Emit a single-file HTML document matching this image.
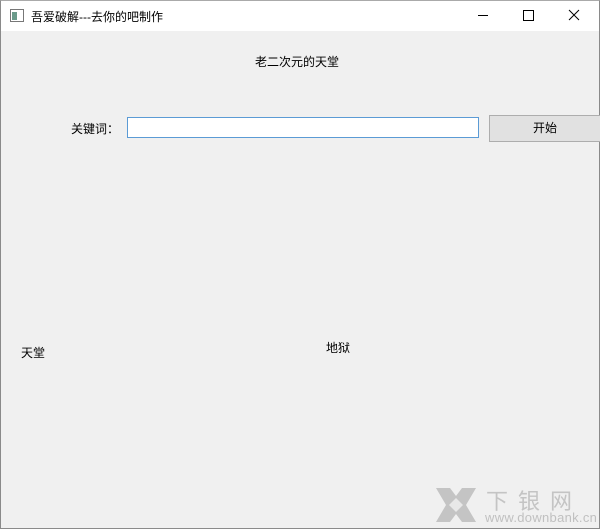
<!DOCTYPE html>
<html><head><meta charset="utf-8"><style>
body{margin:0;width:600px;height:529px;overflow:hidden;background:#f0f0f0;font-family:"Liberation Sans","Noto Sans CJK SC",sans-serif;font-size:12px;color:#000;position:relative}
.a{position:absolute;white-space:nowrap}
#tb{position:absolute;left:0;top:0;width:600px;height:31px;background:#fff}
#win{position:absolute;left:0;top:0;width:598px;height:527px;border:1px solid #8a8a8a;border-top:1px solid #aaa}
</style></head><body>
<div id="tb"></div>
<div id="win"></div>
<svg class="a" style="left:10px;top:9px" width="14" height="13"><rect x="0.5" y="0.5" width="13" height="12" fill="#fff" stroke="#777"/><rect x="2" y="3" width="5" height="8" fill="#6a9a8a"/></svg>
<div class="a" style="left:31px;top:8px;font-size:12px">吾爱破解---去你的吧制作</div>
<svg class="a" style="left:478px;top:9px" width="110" height="14"><line x1="0" y1="6.5" x2="10" y2="6.5" stroke="#000"/><rect x="45.5" y="1.5" width="10" height="10" fill="none" stroke="#000"/><path d="M91 1L101 11M101 1L91 11" stroke="#000"/></svg>
<div class="a" style="left:255px;top:53px">老二次元的天堂</div>
<div class="a" style="left:71px;top:120px">关键词：</div>
<div class="a" style="left:127px;top:117px;width:350px;height:19px;background:#fff;border:1px solid #5b9bd5"></div>
<div class="a" style="left:489px;top:115px;width:112px;height:27px;background:#e1e1e1;border:1px solid #adadad;box-sizing:border-box;text-align:center;line-height:25px">开始</div>
<div class="a" style="left:21px;top:344px">天堂</div>
<div class="a" style="left:326px;top:339px">地狱</div>
<svg class="a" style="left:436px;top:488px" width="40" height="34"><path d="M0 0H14L20 8L26 0H40L30 17L40 34H26L20 26L14 34H0L10 17Z" fill="#c4c4c4"/><path d="M20 10L27 17L20 24L13 17Z" fill="#e8e8e8"/></svg>
<div class="a" style="left:486px;top:484px;font-size:22px;color:#c4c4c4;letter-spacing:10px">下银网</div>
<div class="a" style="left:485px;top:510px;font-size:13px;color:#c0c0c0;letter-spacing:0.3px">www.downbank.cn</div>
</body></html>
